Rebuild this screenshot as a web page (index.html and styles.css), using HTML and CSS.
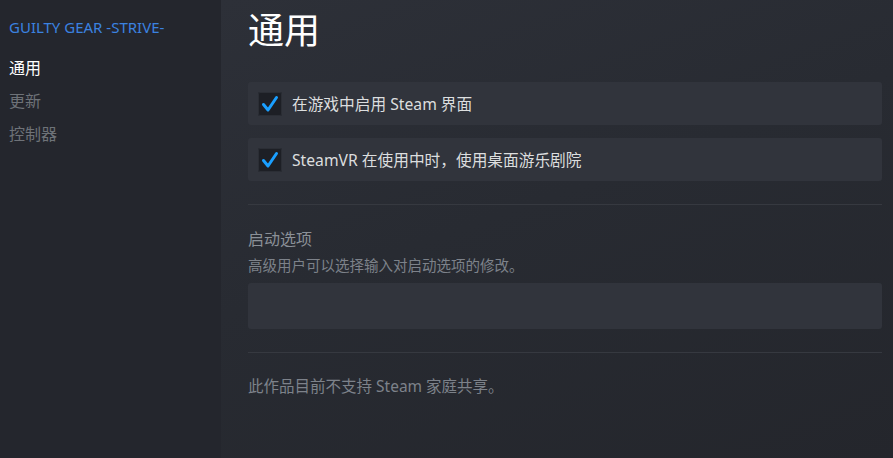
FILE: index.html
```html
<!DOCTYPE html>
<html lang="zh-CN">
  <head>
    <meta charset="UTF-8" />
    <meta name="viewport" content="width=device-width, initial-scale=1.0" />
    <title>GUILTY GEAR -STRIVE- 属性</title>

    <link rel="stylesheet" href="styles.css">
  </head>
  <body>
    <div class="page">
      <nav class="sidebar">
        <div class="game_title">GUILTY GEAR -STRIVE-</div>
        <a class="nav_item active" href="#">通用</a>
        <a class="nav_item" href="#">更新</a>
        <a class="nav_item" href="#">控制器</a>
      </nav>

      <main class="content">
        <h1>通用</h1>

        <div class="options">
          <label class="option">
            <span class="checkbox">
              <svg viewBox="0 0 24 24" width="24" height="24">
                <path d="M5.5 12.5 L10 18 L18.5 5.5" fill="none" stroke="#1a9fff" stroke-width="3" stroke-linecap="round" stroke-linejoin="round" />
              </svg>
            </span>
            在游戏中启用 Steam 界面
          </label>
          <label class="option">
            <span class="checkbox">
              <svg viewBox="0 0 24 24" width="24" height="24">
                <path d="M5.5 12.5 L10 18 L18.5 5.5" fill="none" stroke="#1a9fff" stroke-width="3" stroke-linecap="round" stroke-linejoin="round" />
              </svg>
            </span>
            SteamVR 在使用中时，使用桌面游乐剧院
          </label>
        </div>

        <hr class="divider" />

        <div class="launch">
          <div class="launch_label">启动选项</div>
          <div class="launch_desc">高级用户可以选择输入对启动选项的修改。</div>
          <input class="launch_input" type="text" />
        </div>

        <hr class="divider" />

        <p class="note">此作品目前不支持 Steam 家庭共享。</p>
      </main>
    </div>
  </body>
</html>
```

FILE: styles.css
```css
*,
*::before,
*::after {
  box-sizing: border-box;
}
html {
  font-family: "Noto Sans", "Noto Sans CJK SC", sans-serif;
  margin: 0;
  padding: 0;
}
body {
  margin: 0;
  height: 100vh;
  overflow: hidden;
  background: #282b32;
}

.page {
  display: grid;
  grid-template-columns: 221px 1fr;
  height: 100%;
}

.sidebar {
  background: #24262d;
  padding: 17px 9px;
  display: flex;
  flex-direction: column;
}

.game_title {
  color: #3b82e0;
  font-size: 15px;
  line-height: 20px;
  margin-bottom: 15px;
}

.nav_item {
  color: #6e7278;
  font-size: 16px;
  line-height: 33px;
  text-decoration: none;
}
.nav_item.active {
  color: #ffffff;
}

.content {
  padding: 13px 11px 0 27px;
  background: linear-gradient(160deg, #2d3038 0%, #282b32 45%, #24262c 100%);
}

h1 {
  margin: 0 0 33px;
  font-size: 36px;
  line-height: 36px;
  font-weight: 400;
  color: #ffffff;
}

.options {
  display: flex;
  flex-direction: column;
  gap: 13px;
}

.option {
  display: flex;
  align-items: center;
  gap: 10px;
  height: 43px;
  padding-left: 10px;
  background: #31343c;
  border-radius: 3px;
  color: #dcdedf;
  font-size: 15.7px;
}

.checkbox {
  width: 24px;
  height: 24px;
  background: #1d1f25;
  border-radius: 2px;
  box-shadow: inset 0 0 0 1px #2b2e35;
  display: flex;
}

.divider {
  border: 0;
  height: 1px;
  background: #363940;
  margin: 23px 0 0;
}

.launch {
  padding-top: 24px;
}

.launch_label {
  color: #8b9097;
  font-size: 16px;
  line-height: 20px;
}

.launch_desc {
  color: #7d828a;
  font-size: 14.5px;
  line-height: 20px;
  margin-top: 6px;
}

.launch_input {
  display: block;
  width: 100%;
  height: 46px;
  margin-top: 8px;
  border: 0;
  border-radius: 3px;
  background: #31343c;
}

.note {
  margin: 23px 0 0;
  color: #7d828a;
  font-size: 15.5px;
  line-height: 20px;
}
```
